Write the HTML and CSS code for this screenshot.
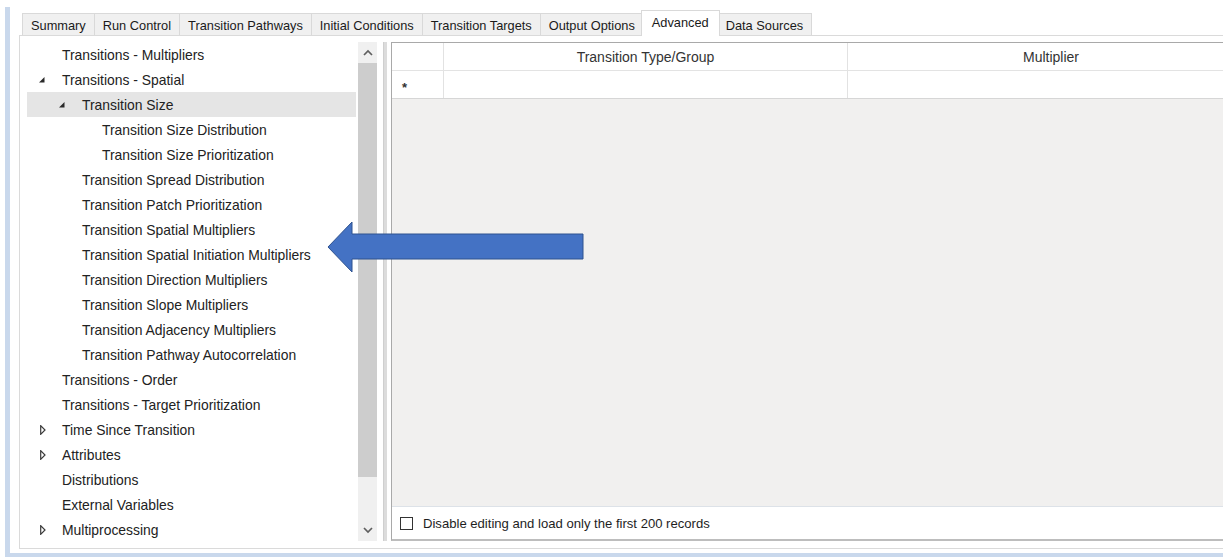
FILE: index.html
```html
<!DOCTYPE html>
<html>
<head>
<meta charset="utf-8">
<link rel="stylesheet" href="styles.css">
</head>
<body>
<div class="app">
  <div class="tabs">
    <div class="tab">Summary</div>
    <div class="tab">Run Control</div>
    <div class="tab">Transition Pathways</div>
    <div class="tab">Initial Conditions</div>
    <div class="tab">Transition Targets</div>
    <div class="tab">Output Options</div>
    <div class="tab active">Advanced</div>
    <div class="tab">Data Sources</div>
  </div>
  <div class="panel">
    <div class="tree">
      <div class="tree-list">
        <div class="node l0"><span class="exp"></span><span class="label">Transitions - Multipliers</span></div>
        <div class="node l0"><span class="exp"><svg class="ico-open" width="6" height="6" viewBox="0 0 6 6"><polygon points="5.5,0 5.5,5.5 0,5.5"/></svg></span><span class="label">Transitions - Spatial</span></div>
        <div class="node l1 selected"><span class="exp"><svg class="ico-open" width="6" height="6" viewBox="0 0 6 6"><polygon points="5.5,0 5.5,5.5 0,5.5"/></svg></span><span class="label">Transition Size</span></div>
        <div class="node l2"><span class="exp"></span><span class="label">Transition Size Distribution</span></div>
        <div class="node l2"><span class="exp"></span><span class="label">Transition Size Prioritization</span></div>
        <div class="node l1"><span class="exp"></span><span class="label">Transition Spread Distribution</span></div>
        <div class="node l1"><span class="exp"></span><span class="label">Transition Patch Prioritization</span></div>
        <div class="node l1"><span class="exp"></span><span class="label">Transition Spatial Multipliers</span></div>
        <div class="node l1"><span class="exp"></span><span class="label">Transition Spatial Initiation Multipliers</span></div>
        <div class="node l1"><span class="exp"></span><span class="label">Transition Direction Multipliers</span></div>
        <div class="node l1"><span class="exp"></span><span class="label">Transition Slope Multipliers</span></div>
        <div class="node l1"><span class="exp"></span><span class="label">Transition Adjacency Multipliers</span></div>
        <div class="node l1"><span class="exp"></span><span class="label">Transition Pathway Autocorrelation</span></div>
        <div class="node l0"><span class="exp"></span><span class="label">Transitions - Order</span></div>
        <div class="node l0"><span class="exp"></span><span class="label">Transitions - Target Prioritization</span></div>
        <div class="node l0"><span class="exp"><svg class="ico-closed" width="6" height="10" viewBox="0 0 6 10"><polygon points="0.7,0.7 5,5 0.7,9.3"/></svg></span><span class="label">Time Since Transition</span></div>
        <div class="node l0"><span class="exp"><svg class="ico-closed" width="6" height="10" viewBox="0 0 6 10"><polygon points="0.7,0.7 5,5 0.7,9.3"/></svg></span><span class="label">Attributes</span></div>
        <div class="node l0"><span class="exp"></span><span class="label">Distributions</span></div>
        <div class="node l0"><span class="exp"></span><span class="label">External Variables</span></div>
        <div class="node l0"><span class="exp"><svg class="ico-closed" width="6" height="10" viewBox="0 0 6 10"><polygon points="0.7,0.7 5,5 0.7,9.3"/></svg></span><span class="label">Multiprocessing</span></div>
      </div>
      <div class="vscroll">
        <div class="sb-btn"><svg width="10" height="7" viewBox="0 0 10 7"><polyline points="1,6 5,2 9,6"/></svg></div>
        <div class="sb-track"><div class="sb-thumb"></div></div>
        <div class="sb-btn"><svg width="10" height="7" viewBox="0 0 10 7"><polyline points="1,1 5,5 9,1"/></svg></div>
      </div>
    </div>
    <div class="splitter"></div>
    <div class="grid">
      <div class="grid-head">
        <div class="cell rowhead"></div>
        <div class="cell col1">Transition Type/Group</div>
        <div class="cell col2">Multiplier</div>
      </div>
      <div class="grid-row">
        <div class="cell rowhead star">*</div>
        <div class="cell col1"></div>
        <div class="cell col2"></div>
      </div>
      <div class="grid-empty"></div>
      <div class="grid-foot">
        <span class="check"></span>
        <span class="check-label">Disable editing and load only the first 200 records</span>
      </div>
    </div>
  </div>
</div>
<svg class="arrow" width="258" height="53" viewBox="0 0 258 53">
  <polygon points="1,26 25,1 25,13 256,13 256,38 25,38 25,51"/>
</svg>
</body>
</html>
```
FILE: styles.css
```css
html, body {
  margin: 0;
  padding: 0;
  overflow: hidden;
  background: #fff;
}

body {
  font-family: "Liberation Sans", Arial, sans-serif;
  color: #1e1e1e;
  position: relative;
  width: 1223px;
  height: 557px;
}

.app {
  margin: 7px 0 0 5px;
  border-left: 5px solid #c9d8ec;
  border-bottom: 4px solid #c9d8ec;
  padding: 3px 0 4px 9px;
}

/* tabs */
.tabs {
  display: flex;
  align-items: flex-end;
  height: 26px;
  margin-left: 4px;
  position: relative;
  z-index: 2;
}

.tab {
  box-sizing: border-box;
  height: 22px;
  margin-bottom: 1px;
  margin-left: -1px;
  padding: 0 8px;
  border: 1px solid #d9d9d9;
  border-bottom: none;
  background: #f0f0f0;
  font-size: 12.8px;
  line-height: 23px;
  color: #1a1a1a;
  white-space: nowrap;
}

.tab.active {
  height: 26px;
  margin: 0 -2px 0 -3px;
  padding: 0 10px;
  background: #fff;
  line-height: 23px;
  position: relative;
  z-index: 3;
}

/* panel */
.panel {
  position: relative;
  z-index: 1;
  margin-top: -1px;
  box-sizing: border-box;
  height: 514px;
  border: 1px solid #dadada;
  border-right: none;
  padding: 6px 0 7px 7px;
  display: flex;
  background: #fff;
}

.tree {
  display: flex;
  width: 350px;
  flex: none;
}

.tree-list {
  width: 331px;
  overflow: hidden;
}

.node {
  display: flex;
  align-items: center;
  height: 25px;
  font-size: 13.9px;
  color: #222;
  white-space: nowrap;
}

.node.l0 { padding-left: 12px; }
.node.l1 { padding-left: 32px; }
.node.l2 { padding-left: 52px; }

.node.selected {
  background: #e5e5e5;
  width: 329px;
  box-sizing: border-box;
}

.exp {
  width: 23px;
  flex: none;
  display: flex;
  align-items: center;
}

.ico-open {
  margin-left: 0;
  margin-top: 1px;
}

.ico-open polygon {
  fill: #2a2a2a;
}

.ico-closed {
  margin-left: 1px;
}

.ico-closed polygon {
  fill: #fff;
  stroke: #3a3a3a;
  stroke-width: 1.2;
}

/* scrollbar */
.vscroll {
  width: 19px;
  flex: none;
  background: #f0f0f0;
  display: flex;
  flex-direction: column;
}

.sb-btn {
  height: 21px;
  display: flex;
  align-items: center;
  justify-content: center;
}

.sb-btn polyline {
  fill: none;
  stroke: #5f5f5f;
  stroke-width: 1.7;
}

.sb-track {
  flex: 1;
}

.sb-thumb {
  height: 414px;
  background: #cdcdcd;
}

/* splitter */
.splitter {
  width: 4px;
  flex: none;
  margin-left: 6px;
  background: #dcdcdc;
  border-left: 1px solid #cfcfcf;
  box-sizing: border-box;
}

/* grid */
.grid {
  margin-left: 4px;
  flex: 1;
  min-width: 0;
  overflow: hidden;
  box-sizing: border-box;
  border: 1px solid #a9a9a9;
  border-right: none;
  border-bottom: 2px solid #bdbdbd;
  display: flex;
  flex-direction: column;
}

.grid-head, .grid-row {
  display: flex;
  flex: none;
  height: 28px;
  box-sizing: border-box;
  background: #fff;
}

.grid-head {
  border-bottom: 1px solid #e3e3e3;
}

.grid-row {
  border-bottom: 1px solid #d6d6d6;
}

.cell {
  box-sizing: border-box;
  flex: none;
  height: 100%;
  display: flex;
  align-items: center;
  justify-content: center;
  font-size: 14px;
  color: #333;
  border-right: 1px solid #e2e2e2;
  white-space: nowrap;
}

.rowhead { width: 52px; }
.col1 { width: 404px; }
.col2 { width: 406px; border-right: none; }

.star {
  justify-content: flex-start;
  padding-left: 10px;
  padding-top: 6px;
  font-size: 13px;
  font-weight: bold;
  color: #333;
}

.grid-empty {
  flex: 1;
  background: #f1f0ef;
}

.grid-foot {
  height: 33px;
  flex: none;
  box-sizing: border-box;
  border-top: 1px solid #dde2e8;
  background: #fff;
  display: flex;
  align-items: center;
  padding-left: 8px;
}

.check {
  width: 13px;
  height: 13px;
  box-sizing: border-box;
  border: 1px solid #333;
  background: #fff;
  flex: none;
}

.check-label {
  margin-left: 10px;
  font-size: 13.1px;
  color: #1e1e1e;
  white-space: nowrap;
}

/* callout arrow */
.arrow {
  position: absolute;
  left: 327px;
  top: 221px;
  z-index: 10;
}

.arrow polygon {
  fill: #4472c4;
  stroke: #2f528f;
  stroke-width: 1;
}
```
